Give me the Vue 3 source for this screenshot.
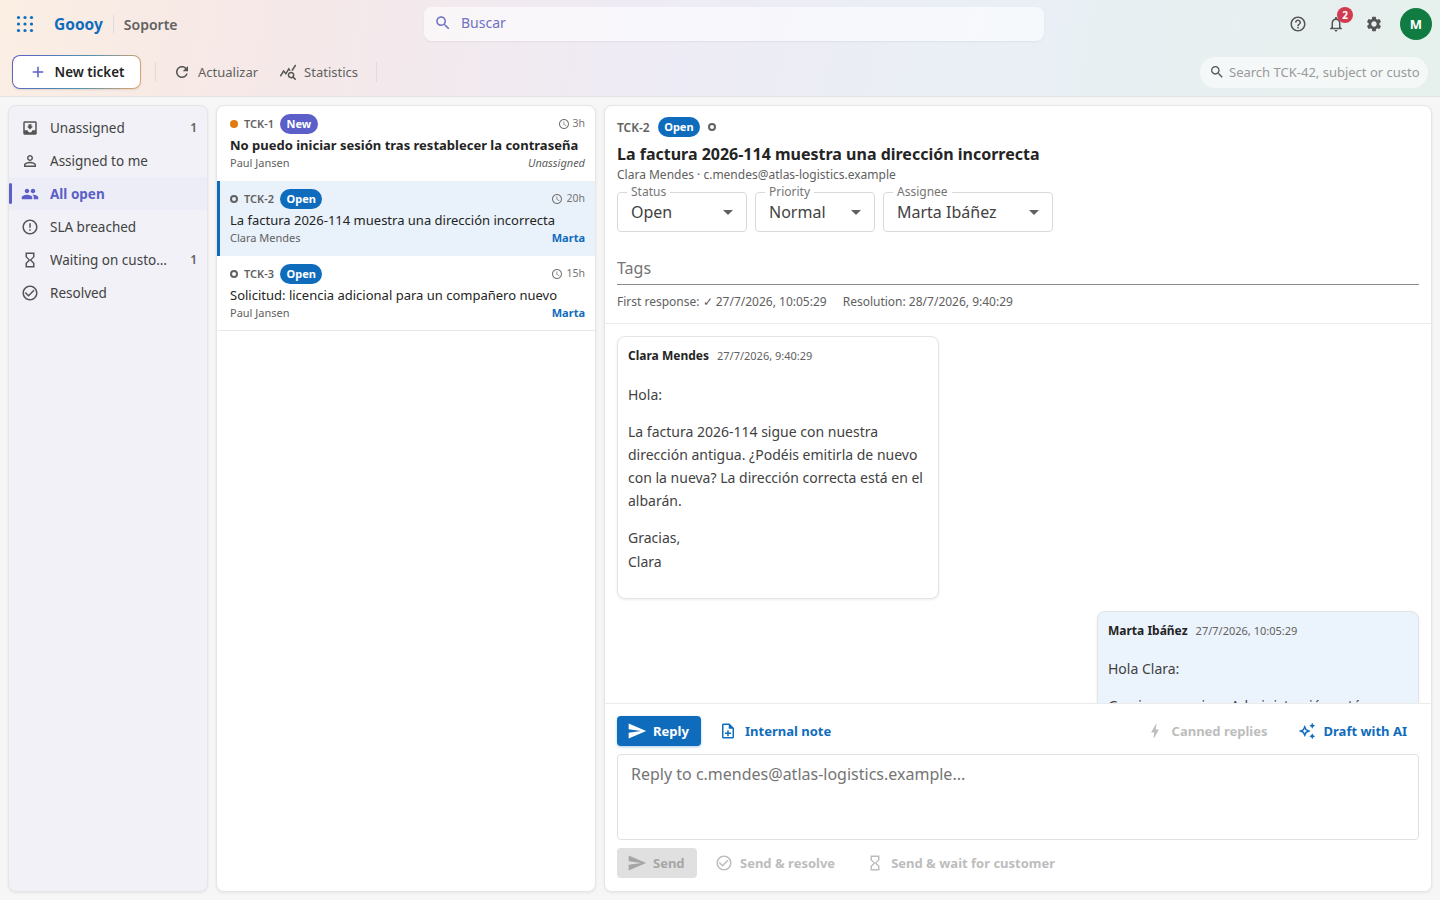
<template>
  <div class="app">
    <!-- Top gradient area -->
    <header class="top">
      <div class="appbar">
        <div class="brand">
          <svg class="grid-ico" viewBox="0 0 18 18" width="18" height="18">
            <circle v-for="d in dots" :key="d.k" :cx="d.x" :cy="d.y" r="1.6" />
          </svg>
          <span class="logo">Goooy</span>
          <span class="brand-sep"></span>
          <span class="app-name">Soporte</span>
        </div>
        <div class="search">
          <svg class="ico s18" viewBox="0 0 24 24"><path :d="icons.search" /></svg>
          <span>Buscar</span>
        </div>
        <div class="top-actions">
          <svg class="ico s18" viewBox="0 0 24 24"><path :d="icons.help" /></svg>
          <div class="bell">
            <svg class="ico s18" viewBox="0 0 24 24"><path :d="icons.bell" /></svg>
            <span class="badge">2</span>
          </div>
          <svg class="ico s18" viewBox="0 0 24 24"><path :d="icons.settings" /></svg>
          <div class="avatar">M</div>
        </div>
      </div>

      <div class="toolbar">
        <button class="new-btn">
          <svg class="ico s18" viewBox="0 0 24 24"><path :d="icons.add" /></svg>
          New ticket
        </button>
        <span class="tool-sep"></span>
        <button class="tool-btn">
          <svg class="ico s18" viewBox="0 0 24 24"><path :d="icons.refresh" /></svg>
          Actualizar
        </button>
        <button class="tool-btn">
          <svg class="ico s18" viewBox="0 0 24 24"><path :d="icons.stats" /></svg>
          Statistics
        </button>
        <span class="tool-sep"></span>
        <div class="ticket-search">
          <svg class="ico s16" viewBox="0 0 24 24"><path :d="icons.search" /></svg>
          <span>Search TCK-42, subject or custo</span>
        </div>
      </div>
    </header>

    <main class="body">
      <!-- Views -->
      <nav class="side panel">
        <div v-for="v in views" :key="v.label" class="side-item" :class="{ active: v.active }">
          <svg class="ico s18" viewBox="0 0 24 24"><path :d="icons[v.icon]" /></svg>
          <span class="side-label">{{ v.label }}</span>
          <span v-if="v.count" class="side-count">{{ v.count }}</span>
        </div>
      </nav>

      <!-- Ticket list -->
      <section class="list panel">
        <article v-for="t in tickets" :key="t.id" class="row" :class="{ selected: t.selected }">
          <div class="row-top">
            <span class="dot" :class="t.status === 'New' ? 'dot-new' : 'dot-open'"></span>
            <span class="tid">{{ t.id }}</span>
            <span class="chip" :class="t.status === 'New' ? 'chip-new' : 'chip-open'">{{ t.status }}</span>
            <span class="age">
              <svg class="ico s12" viewBox="0 0 24 24"><path :d="icons.clock" /></svg>
              <span class="age-txt">{{ t.age }}</span>
            </span>
          </div>
          <div class="subject" :class="{ unread: t.unread }">{{ t.subject }}</div>
          <div class="row-bottom">
            <span>{{ t.customer }}</span>
            <span v-if="t.assignee" class="assignee">{{ t.assignee }}</span>
            <span v-else class="unassigned">Unassigned</span>
          </div>
        </article>
      </section>

      <!-- Ticket detail -->
      <section class="detail panel">
        <div class="detail-head">
          <div class="head-top">
            <span class="head-id">TCK-2</span>
            <span class="chip chip-open">Open</span>
            <span class="dot dot-open"></span>
          </div>
          <h1 class="title">La factura 2026-114 muestra una dirección incorrecta</h1>
          <div class="contact">Clara Mendes · c.mendes@atlas-logistics.example</div>
          <div class="selects">
            <div v-for="s in selects" :key="s.label" class="select" :style="{ width: s.width + 'px' }">
              <span class="select-label">{{ s.label }}</span>
              <span class="select-value">{{ s.value }}</span>
              <span class="caret"></span>
            </div>
          </div>
          <div class="tags">Tags</div>
          <div class="sla">
            <span>First response: ✓ 27/7/2026, 10:05:29</span>
            <span>Resolution: 28/7/2026, 9:40:29</span>
          </div>
        </div>

        <div class="thread">
          <div class="msg">
            <div class="msg-head"><b>Clara Mendes</b><span>27/7/2026, 9:40:29</span></div>
            <p>Hola:</p>
            <p>La factura 2026-114 sigue con nuestra dirección antigua. ¿Podéis emitirla de nuevo con la nueva? La dirección correcta está en el albarán.</p>
            <p>Gracias,<br />Clara</p>
          </div>
          <div class="msg msg-agent">
            <div class="msg-head"><b>Marta Ibáñez</b><span>27/7/2026, 10:05:29</span></div>
            <p>Hola Clara:</p>
            <p>Gracias por avisar. Administración está</p>
          </div>
        </div>

        <div class="composer">
          <div class="comp-tabs">
            <button class="reply-btn">
              <svg class="ico s20" viewBox="0 0 24 24"><path :d="icons.send" /></svg>
              Reply
            </button>
            <button class="link-btn note-btn">
              <svg class="ico s18" viewBox="0 0 24 24"><path :d="icons.note" /></svg>
              Internal note
            </button>
            <span class="spacer"></span>
            <button class="link-btn off">
              <svg class="ico s18" viewBox="0 0 24 24"><path :d="icons.bolt" /></svg>
              Canned replies
            </button>
            <button class="link-btn ai-btn">
              <svg class="ico s18" viewBox="0 0 24 24"><path :d="icons.spark" /></svg>
              Draft with AI
            </button>
          </div>
          <div class="reply-box">Reply to c.mendes@atlas-logistics.example...</div>
          <div class="comp-actions">
            <button class="send-btn">
              <svg class="ico s20" viewBox="0 0 24 24"><path :d="icons.send" /></svg>
              Send
            </button>
            <button class="link-btn off">
              <svg class="ico s18" viewBox="0 0 24 24"><path :d="icons.resolved" /></svg>
              Send &amp; resolve
            </button>
            <button class="link-btn off wait-btn">
              <svg class="ico s18" viewBox="0 0 24 24"><path :d="icons.hourglass" /></svg>
              Send &amp; wait for customer
            </button>
          </div>
        </div>
      </section>
    </main>
  </div>
</template>

<script setup>
const icons = {
  search: 'M15.5 14h-.79l-.28-.27C15.41 12.59 16 11.11 16 9.5 16 5.91 13.09 3 9.5 3S3 5.91 3 9.5 5.91 16 9.5 16c1.61 0 3.09-.59 4.23-1.57l.27.28v.79l5 4.99L20.49 19l-4.99-5zm-6 0C7.01 14 5 11.99 5 9.5S7.01 5 9.5 5 14 7.01 14 9.5 11.99 14 9.5 14z',
  add: 'M19 13h-6v6h-2v-6H5v-2h6V5h2v6h6v2z',
  refresh: 'M17.65 6.35C16.2 4.9 14.21 4 12 4c-4.42 0-7.99 3.58-7.99 8s3.57 8 7.99 8c3.73 0 6.84-2.55 7.73-6h-2.08c-.82 2.33-3.04 4-5.65 4-3.31 0-6-2.69-6-6s2.69-6 6-6c1.66 0 3.14.69 4.22 1.78L13 11h7V4l-2.35 2.35z',
  stats: 'M19.88 18.47c.44-.7.7-1.51.7-2.39 0-2.49-2.01-4.5-4.5-4.5s-4.5 2.01-4.5 4.5 2.01 4.5 4.49 4.5c.88 0 1.7-.26 2.39-.7L21.58 23 23 21.58l-3.12-3.11zm-3.8.11c-1.38 0-2.5-1.12-2.5-2.5s1.12-2.5 2.5-2.5 2.5 1.12 2.5 2.5-1.12 2.5-2.5 2.5zm-.36-8.5c-.74.02-1.45.18-2.1.45l-.55-.83-3.8 6.18-3.01-3.52-3.63 5.81L1 17l5-8 3 3.5L13 6l2.72 4.08zm2.59.5c-.64-.28-1.33-.45-2.05-.49L21.38 2 23 3.18l-4.69 7.4z',
  help: 'M11 18h2v-2h-2v2zm1-16C6.48 2 2 6.48 2 12s4.48 10 10 10 10-4.48 10-10S17.52 2 12 2zm0 18c-4.41 0-8-3.59-8-8s3.59-8 8-8 8 3.59 8 8-3.59 8-8 8zm0-14c-2.21 0-4 1.79-4 4h2c0-1.1.9-2 2-2s2 .9 2 2c0 2-3 1.75-3 5h2c0-2.25 3-2.5 3-5 0-2.21-1.79-4-4-4z',
  bell: 'M12 22c1.1 0 2-.9 2-2h-4c0 1.1.9 2 2 2zm6-6v-5c0-3.07-1.63-5.64-4.5-6.32V4c0-.83-.67-1.5-1.5-1.5s-1.5.67-1.5 1.5v.68C7.64 5.36 6 7.92 6 11v5l-2 2v1h16v-1l-2-2zm-2 1H8v-6c0-2.48 1.51-4.5 4-4.5s4 2.02 4 4.5v6z',
  settings: 'M19.14 12.94c.04-.3.06-.61.06-.94 0-.32-.02-.64-.07-.94l2.03-1.58c.18-.14.23-.41.12-.61l-1.92-3.32c-.12-.22-.37-.29-.59-.22l-2.39.96c-.5-.38-1.03-.7-1.62-.94l-.36-2.54c-.04-.24-.24-.41-.48-.41h-3.84c-.24 0-.43.17-.47.41l-.36 2.54c-.59.24-1.13.57-1.62.94l-2.39-.96c-.22-.08-.47 0-.59.22L2.74 8.87c-.12.21-.08.47.12.61l2.03 1.58c-.05.3-.09.63-.09.94s.02.64.07.94l-2.03 1.58c-.18.14-.23.41-.12.61l1.92 3.32c.12.22.37.29.59.22l2.39-.96c.5.38 1.03.7 1.62.94l.36 2.54c.05.24.24.41.48.41h3.84c.24 0 .44-.17.47-.41l.36-2.54c.59-.24 1.13-.56 1.62-.94l2.39.96c.22.08.47 0 .59-.22l1.92-3.32c.12-.22.07-.47-.12-.61l-2.01-1.58zM12 15.6c-1.98 0-3.6-1.62-3.6-3.6s1.62-3.6 3.6-3.6 3.6 1.62 3.6 3.6-1.62 3.6-3.6 3.6z',
  inbox: 'M19 3H4.99C3.88 3 3.01 3.9 3.01 5L3 19c0 1.1.88 2 1.99 2H19c1.1 0 2-.9 2-2V5c0-1.1-.9-2-2-2zm0 12h-4c0 1.66-1.35 3-3 3s-3-1.34-3-3H4.99V5H19v10zm-3-5h-2V7h-4v3H8l4 4 4-4z',
  person: 'M12 5.9c1.16 0 2.1.94 2.1 2.1s-.94 2.1-2.1 2.1S9.9 9.16 9.9 8s.94-2.1 2.1-2.1m0 9c2.97 0 6.1 1.46 6.1 2.1v1.1H5.9V17c0-.64 3.13-2.1 6.1-2.1M12 4C9.79 4 8 5.79 8 8s1.79 4 4 4 4-1.79 4-4-1.79-4-4-4zm0 9c-2.67 0-8 1.34-8 4v3h16v-3c0-2.66-5.33-4-8-4z',
  group: 'M16 11c1.66 0 2.99-1.34 2.99-3S17.66 5 16 5c-1.66 0-3 1.34-3 3s1.34 3 3 3zm-8 0c1.66 0 2.99-1.34 2.99-3S9.66 5 8 5C6.34 5 5 6.34 5 8s1.34 3 3 3zm0 2c-2.33 0-7 1.17-7 3.5V19h14v-2.5c0-2.33-4.67-3.5-7-3.5zm8 0c-.29 0-.62.02-.97.05 1.16.84 1.97 1.97 1.97 3.45V19h6v-2.5c0-2.33-4.67-3.5-7-3.5z',
  error: 'M11 15h2v2h-2zm0-8h2v6h-2zm.99-5C6.47 2 2 6.48 2 12s4.47 10 9.99 10C17.52 22 22 17.52 22 12S17.52 2 11.99 2zM12 20c-4.42 0-8-3.58-8-8s3.58-8 8-8 8 3.58 8 8-3.58 8-8 8z',
  hourglass: 'M6 2v6h.01L6 8.01 10 12l-4 4 .01.01H6V22h12v-5.99h-.01L18 16l-4-4 4-3.99-.01-.01H18V2H6zm10 14.5V20H8v-3.5l4-4 4 4zm-4-5l-4-4V4h8v3.5l-4 4z',
  resolved: 'M16.59 7.58 10 14.17l-3.59-3.58L5 12l5 5 8-8zM12 2C6.48 2 2 6.48 2 12s4.48 10 10 10 10-4.48 10-10S17.52 2 12 2zm0 18c-4.42 0-8-3.58-8-8s3.58-8 8-8 8 3.58 8 8-3.58 8-8 8z',
  clock: 'M11.99 2C6.47 2 2 6.48 2 12s4.47 10 9.99 10C17.52 22 22 17.52 22 12S17.52 2 11.99 2zM12 20c-4.42 0-8-3.58-8-8s3.58-8 8-8 8 3.58 8 8-3.58 8-8 8zm.5-13H11v6l5.25 3.15.75-1.23-4.5-2.67z',
  send: 'M2.01 21 23 12 2.01 3 2 10l15 2-15 2z',
  note: 'M13 11h-2v3H8v2h3v3h2v-3h3v-2h-3zm1-9H6c-1.1 0-2 .9-2 2v16c0 1.1.89 2 1.99 2H18c1.1 0 2-.9 2-2V8l-6-6zm4 18H6V4h7v5h5v11z',
  bolt: 'M11 21h-1l1-7H7.5c-.58 0-.57-.32-.38-.66.19-.34.05-.08.07-.12C8.48 10.94 10.42 7.54 13 3h1l-1 7h3.5c.49 0 .56.33.47.51l-.07.15C12.96 17.55 11 21 11 21z',
  spark: 'M19 9l1.25-2.75L23 5l-2.75-1.25L19 1l-1.25 2.75L15 5l2.75 1.25L19 9zm-7.5.5L9 4 6.5 9.5 1 12l5.5 2.5L9 20l2.5-5.5L17 12l-5.5-2.5zM9.99 12.99 9 15.17l-.99-2.18L5.83 12l2.18-.99L9 8.83l.99 2.18 2.18.99-2.18.99zM19 15l-1.25 2.75L15 19l2.75 1.25L19 23l1.25-2.75L23 19l-2.75-1.25L19 15z'
}

// 3x3 launcher dots
const dots = []
for (const y of [2.5, 9, 15.5]) {
  for (const x of [2.5, 9, 15.5]) dots.push({ k: x + '-' + y, x, y })
}

const views = [
  { label: 'Unassigned', icon: 'inbox', count: 1 },
  { label: 'Assigned to me', icon: 'person' },
  { label: 'All open', icon: 'group', active: true },
  { label: 'SLA breached', icon: 'error' },
  { label: 'Waiting on customer', icon: 'hourglass', count: 1 },
  { label: 'Resolved', icon: 'resolved' }
]

const tickets = [
  { id: 'TCK-1', status: 'New', age: '3h', subject: 'No puedo iniciar sesión tras restablecer la contraseña', customer: 'Paul Jansen', unread: true },
  { id: 'TCK-2', status: 'Open', age: '20h', subject: 'La factura 2026-114 muestra una dirección incorrecta', customer: 'Clara Mendes', assignee: 'Marta', selected: true },
  { id: 'TCK-3', status: 'Open', age: '15h', subject: 'Solicitud: licencia adicional para un compañero nuevo', customer: 'Paul Jansen', assignee: 'Marta' }
]

const selects = [
  { label: 'Status', value: 'Open', width: 130 },
  { label: 'Priority', value: 'Normal', width: 120 },
  { label: 'Assignee', value: 'Marta Ibáñez', width: 170 }
]
</script>

<style>
html, body { margin: 0; height: 100%; overflow: hidden; }
</style>

<style scoped>
.app {
  width: 1440px;
  height: 900px;
  display: flex;
  flex-direction: column;
  background: #f6f6f6;
  color: #242424;
  font-family: "Noto Sans", sans-serif;
  font-size: 14px;
  overflow: hidden;
}
button { font-family: inherit; }
.ico { display: block; flex: none; fill: currentColor; }
.s12 { width: 12px; height: 12px; }
.s16 { width: 16px; height: 16px; }
.s18 { width: 18px; height: 18px; }
.s20 { width: 20px; height: 20px; }

/* header */
.top {
  height: 97px;
  box-sizing: border-box;
  border-bottom: 1px solid #e2e2e2;
  background: linear-gradient(100deg, #fbeee3 0%, #f5e8e8 20%, #eeebf5 45%, #e9eff5 70%, #e6f0ec 100%);
}
.appbar {
  height: 48px;
  display: grid;
  grid-template-columns: 424px 620px 1fr;
  align-items: center;
}
.brand { display: flex; align-items: center; padding-left: 16px; }
.grid-ico { fill: #0f6cbd; }
.logo { margin-left: 20px; font-size: 15.5px; font-weight: 700; color: #0f6cbd; }
.brand-sep { width: 1px; height: 18px; margin: 0 10px; background: #e0dadb; }
.app-name { font-size: 14px; font-weight: 600; color: #616161; }
.search {
  height: 34px;
  box-sizing: border-box;
  display: flex;
  align-items: center;
  gap: 9px;
  padding: 0 0 3px 10px;
  border-radius: 8px;
  background: rgba(255, 255, 255, 0.6);
  box-shadow: 0 1px 2px rgba(0, 0, 0, 0.05);
  color: #6f71c4;
  font-size: 14px;
}
.top-actions {
  display: flex;
  align-items: center;
  justify-content: flex-end;
  gap: 20px;
  padding-right: 8px;
  color: #555;
}
.bell { position: relative; }
.badge {
  position: absolute;
  top: -8px;
  left: 10px;
  width: 16px;
  height: 16px;
  border-radius: 50%;
  background: #d13a50;
  color: #fff;
  font-size: 10px;
  font-weight: 700;
  line-height: 16px;
  text-align: center;
}
.avatar {
  width: 32px;
  height: 32px;
  margin-left: -3px;
  border-radius: 50%;
  background: #107c41;
  color: #fff;
  font-size: 13px;
  font-weight: 700;
  line-height: 32px;
  text-align: center;
}

.toolbar { height: 48px; display: flex; align-items: center; padding: 0 12px; }
.new-btn {
  width: 129px;
  height: 34px;
  box-sizing: border-box;
  display: flex;
  align-items: center;
  justify-content: center;
  gap: 8px;
  padding: 0;
  border: 1px solid transparent;
  border-radius: 8px;
  background: linear-gradient(#fff, #fff) padding-box, linear-gradient(110deg, #5b5fc7, #4f93b0 55%, #e8a468) border-box;
  box-shadow: 0 1px 2px rgba(0, 0, 0, 0.1);
  color: #242424;
  font-size: 13.4px;
  font-weight: 600;
}
.new-btn .ico { color: #5b5fc7; }
.tool-sep { width: 1px; height: 20px; background: #e0dadb; }
.new-btn + .tool-sep { margin: 0 9px 0 14px; }
.tool-btn {
  display: flex;
  align-items: center;
  gap: 7px;
  padding: 0 8px;
  border: 0;
  background: none;
  color: #616161;
  font-size: 13px;
}
.tool-btn + .tool-btn { margin-left: 5px; }
.tool-btn .ico { color: #555; }
.tool-btn + .tool-sep { margin-left: 10px; }
.ticket-search {
  margin-left: auto;
  width: 228px;
  height: 31px;
  box-sizing: border-box;
  display: flex;
  align-items: center;
  gap: 4px;
  padding-left: 9px;
  border-radius: 16px;
  background: rgba(255, 255, 255, 0.55);
  color: #9a9a9a;
  font-size: 13px;
  white-space: nowrap;
  overflow: hidden;
}
.ticket-search .ico { color: #555; }

/* three panes */
.body { flex: 1; min-height: 0; display: flex; gap: 8px; padding: 8px; }
.panel {
  box-sizing: border-box;
  border: 1px solid #e6e6e6;
  border-radius: 8px;
  box-shadow: 0 1px 3px rgba(0, 0, 0, 0.07);
  overflow: hidden;
}
.side { width: 200px; padding-top: 5px; background: #f1f1f7; }
.side-item {
  height: 33px;
  display: flex;
  align-items: center;
  gap: 11px;
  padding: 0 10px 0 12px;
  position: relative;
  color: #424242;
  font-size: 13.5px;
}
.side-item .ico { color: #555; }
.side-label { flex: 1; min-width: 0; margin-right: 12px; overflow: hidden; text-overflow: ellipsis; white-space: nowrap; }
.side-count { font-size: 12px; font-weight: 600; color: #616161; }
.side-item.active { background: #ededf8; color: #5b5fc7; font-weight: 700; }
.side-item.active .ico { color: #5b5fc7; }
.side-item.active::before {
  content: "";
  position: absolute;
  left: 0;
  top: 6px;
  bottom: 6px;
  width: 3px;
  border-radius: 2px;
  background: #5b5fc7;
}

.list { width: 380px; background: #fff; }
.row {
  height: 75px;
  box-sizing: border-box;
  padding: 8px 10px 0 10px;
  border-left: 3px solid transparent;
}
.row:last-child { border-bottom: 1px solid #e8e8e8; }
.row.selected { background: #e9f1fa; border-left-color: #0f6cbd; }
.row-top { height: 20px; display: flex; align-items: center; }
.dot { width: 8px; height: 8px; box-sizing: border-box; border-radius: 50%; flex: none; }
.dot-new { background: #e07b10; }
.dot-open { border: 2px solid #616161; }
.tid { margin: 0 0 2px 6px; font-size: 11px; font-weight: 600; color: #616161; }
.chip {
  height: 20px;
  padding: 0 6.5px;
  border-radius: 10px;
  color: #fff;
  font-size: 11px;
  font-weight: 700;
  line-height: 20px;
}
.row .chip { margin-left: 6px; }
.chip-new { background: #5b5fc7; }
.chip-open { background: #0f6cbd; }
.age {
  margin-left: auto;
  display: flex;
  align-items: center;
  gap: 3px;
  color: #757575;
}
.age-txt { margin-bottom: 2px; font-size: 10.5px; }
.subject { margin-top: 2px; font-size: 13px; line-height: 18px; white-space: nowrap; color: #242424; }
.subject.unread { font-weight: 700; }
.row-bottom {
  margin-top: 1px;
  display: flex;
  justify-content: space-between;
  font-size: 11px;
  line-height: 16px;
  color: #616161;
}
.assignee { font-weight: 700; color: #0f6cbd; }
.unassigned { font-style: italic; }

/* detail */
.detail { flex: 1; min-width: 0; display: flex; flex-direction: column; background: #fff; }
.detail-head { height: 218px; flex: none; box-sizing: border-box; padding: 11px 12px 0; border-bottom: 1px solid #ebebeb; }
.head-top { height: 20px; display: flex; align-items: center; gap: 8px; }
.head-id { font-size: 12px; font-weight: 600; color: #616161; }
.title { margin: 6px 0 0; font-size: 16px; font-weight: 700; line-height: 22px; color: #242424; }
.contact { margin-top: 1px; font-size: 12px; line-height: 18px; color: #616161; }
.selects { display: flex; gap: 8px; margin-top: 8px; }
.select {
  position: relative;
  height: 40px;
  box-sizing: border-box;
  display: flex;
  align-items: center;
  padding-left: 13px;
  border: 1px solid #d9d9d9;
  border-radius: 4px;
  font-size: 16px;
  color: #424242;
}
.select-label {
  position: absolute;
  top: -9px;
  left: 9px;
  padding: 0 4px;
  background: #fff;
  font-size: 12px;
  line-height: 16px;
  color: #757575;
}
.caret {
  position: absolute;
  right: 13px;
  top: 17px;
  border-left: 5px solid transparent;
  border-right: 5px solid transparent;
  border-top: 5px solid #616161;
}
.tags {
  margin-top: 24px;
  height: 29px;
  box-sizing: border-box;
  border-bottom: 1px solid #8a8a8a;
  font-size: 16px;
  line-height: 24px;
  color: #757575;
}
.sla { display: flex; gap: 16px; margin-top: 9px; font-size: 12px; line-height: 16px; color: #616161; }

.thread { flex: 1; min-height: 0; overflow: hidden; padding: 12px 12px 0; display: flex; flex-direction: column; gap: 12px; }
.msg {
  width: 322px;
  flex: none;
  box-sizing: border-box;
  padding: 10px 10px 25px;
  border: 1px solid #e4e4e4;
  border-radius: 8px;
  box-shadow: 0 1px 3px rgba(0, 0, 0, 0.08);
  background: #fff;
  font-size: 14px;
  line-height: 23.1px;
  color: #424242;
}
.msg-agent { align-self: flex-end; background: #ebf3fc; }
.msg-agent .msg-head { margin-bottom: 17px; }
.msg-head { display: flex; align-items: baseline; gap: 8px; margin-bottom: 18px; line-height: 18px; font-size: 11px; color: #616161; }
.msg-head b { font-size: 12px; font-weight: 700; color: #242424; }
.msg p { margin: 14px 0 0; }
.msg-head + p { margin-top: 0; }

.composer { flex: none; height: 188px; box-sizing: border-box; padding: 12px 12px 0; border-top: 1px solid #ebebeb; background: #fff; }
.comp-tabs, .comp-actions { display: flex; align-items: center; }
.comp-tabs { height: 30px; }
.reply-btn, .send-btn {
  height: 30px;
  display: flex;
  align-items: center;
  gap: 6px;
  padding: 0 0 0 10px;
  border: 0;
  border-radius: 4px;
  font-size: 13px;
  font-weight: 700;
}
.reply-btn {
  width: 84px;
  background: #0f6cbd;
  box-shadow: 0 1px 3px rgba(15, 108, 189, 0.35);
  color: #fff;
}
.send-btn { width: 80px; background: #e0e0e0; color: #a6a6a6; }
.link-btn {
  display: flex;
  align-items: center;
  gap: 8px;
  padding: 0 12px;
  border: 0;
  background: none;
  color: #0f6cbd;
  font-size: 13px;
  font-weight: 700;
  white-space: nowrap;
}
.link-btn.off { color: #bdbdbd; }
.note-btn { margin-left: 6px; }
.ai-btn { margin-left: 6px; }
.spacer { flex: 1; }
.reply-box {
  margin-top: 8px;
  height: 86px;
  box-sizing: border-box;
  padding: 7px 13px;
  border: 1px solid #e0e0e0;
  border-radius: 4px;
  font-size: 16px;
  line-height: 24px;
  color: #757575;
}
.comp-actions { margin-top: 8px; height: 30px; gap: 6px; }
.comp-actions .link-btn { gap: 7px; }
.comp-actions .wait-btn { margin-left: 1px; }
</style>
